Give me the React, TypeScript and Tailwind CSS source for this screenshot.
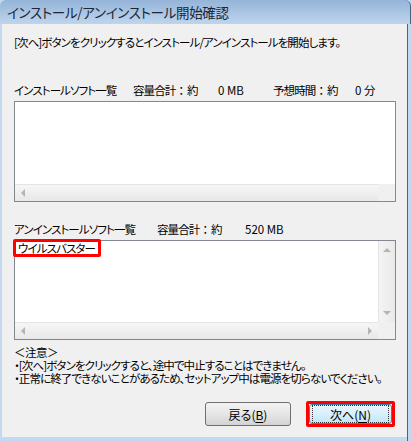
import React from 'react'

const FONT = "font-['Noto_Sans_CJK_JP','Noto_Sans',sans-serif] [font-feature-settings:'palt']"

function Tri({ dir }: { dir: 'up' | 'down' | 'left' | 'right' }) {
  const pts = {
    up: '0,4 4,0 8,4',
    down: '0,0 8,0 4,4',
    left: '4,0 4,8 0,4',
    right: '0,0 0,8 4,4',
  }[dir]
  const vertical = dir === 'up' || dir === 'down'
  return (
    <svg width={vertical ? 8 : 4} height={vertical ? 4 : 8} viewBox={vertical ? '0 0 8 4' : '0 0 4 8'}>
      <polygon points={pts} fill="#b4b4b4" />
    </svg>
  )
}

function HScroll({ showRight }: { showRight: boolean }) {
  return (
    <div className="flex h-[17px] shrink-0">
      <div className="flex-1 flex items-center justify-between px-[6px] bg-gradient-to-b from-[#f6f6f6] to-[#e8e8e8] border-t border-[#e4e4e4]">
        <Tri dir="left" />
        {showRight && <Tri dir="right" />}
      </div>
      <div className="w-[17px] bg-[#f0f0f0]" />
    </div>
  )
}

// full-width colon without proportional squeeze
function Colon() {
  return <span className="[font-feature-settings:normal] tracking-normal">：</span>
}

function Button({ label, hotkey, primary }: { label: string; hotkey: string; primary?: boolean }) {
  const inner = (
    <div
      className={`w-full h-full flex items-center justify-center rounded-[3px] border text-[12px] tracking-normal text-black ${
        primary
          ? 'border-[#3c7fb1] bg-gradient-to-b from-[#eaf6fd] via-[#d9f0fc] to-[#bee6fd]'
          : 'border-[#707070] bg-gradient-to-b from-[#f2f2f2] via-[#e6e6e6] to-[#d3d3d3]'
      }`}
    >
      <div className={`flex items-center justify-center w-full h-full ${primary ? 'border border-dotted border-[#333] m-[2px]' : ''}`}>
        {label}(<span className="underline underline-offset-2">{hotkey}</span>)
      </div>
    </div>
  )
  if (primary) {
    return (
      <div className="w-[89px] h-[26px] border-[3px] border-[#ff0000] rounded-[2px] flex">
        {inner}
      </div>
    )
  }
  return <div className="w-[86px] h-[24px] flex">{inner}</div>
}

export default function App() {
  return (
    <div className={`w-[411px] h-[441px] bg-[#c4d9ef] flex flex-col ${FONT} text-black`}>
      {/* title bar */}
      <div className="h-[24px] shrink-0 flex items-center pl-[7px] bg-gradient-to-b from-[#94b4d8] to-[#bfd5ed] border-r border-[#4a6480] rounded-tl-[6px] rounded-tr-[6px]">
        <span className="text-[13.5px] text-[#1c2634] tracking-[-0.3px]">インストール/アンインストール開始確認</span>
      </div>

      <div className="flex flex-1">
        <div className="w-[2px] shrink-0" />
        <div className="flex-1 flex flex-col bg-[#f0f0f0] mb-[4px] text-[11.5px] leading-[13px] tracking-[-0.9px] whitespace-nowrap">
          <div className="pl-[12px] pt-[12px]">[次へ]ボタンをクリックするとインストール/アンインストールを開始します。</div>

          <div className="flex pl-[12px] mt-[35px]">
            <span className="w-[119px]">インストールソフト一覧</span>
            <span className="w-[85px]">容量合計<Colon />約</span>
            <span className="w-[55px] tracking-normal">0 MB</span>
            <span className="w-[82px]">予想時間<Colon />約</span>
            <span className="tracking-normal">0 分</span>
          </div>

          <div className="ml-[12px] mt-[4px] w-[382px] h-[101px] border border-[#828790] bg-white flex flex-col">
            <div className="flex-1" />
            <HScroll showRight={false} />
          </div>

          <div className="flex pl-[12px] mt-[21px]">
            <span className="w-[143px]">アンインストールソフト一覧</span>
            <span className="w-[88px]">容量合計<Colon />約</span>
            <span className="tracking-normal">520 MB</span>
          </div>

          <div className="relative ml-[12px] mt-[4px] w-[382px] h-[100px] border border-[#828790] bg-white flex flex-col">
            <div className="flex flex-1">
              <div className="flex-1" />
              <div className="w-[17px] flex flex-col items-center justify-between py-[7px] bg-gradient-to-r from-[#f4f4f4] to-[#e9e9e9] border-l border-[#e4e4e4]">
                <Tri dir="up" />
                <Tri dir="down" />
              </div>
            </div>
            <HScroll showRight={true} />
            <div className="absolute left-[-2px] top-[-2px] w-[88px] h-[18px] border-[3px] border-[#ff0000] rounded-[2px] flex items-center pl-[2px]">
              ウイルスバスター
            </div>
          </div>

          <div className="pl-[12px] mt-[6px] flex flex-col">
            <span className="[font-feature-settings:normal] tracking-[-0.5px]">＜注意＞</span>
            <span>・[次へ]ボタンをクリックすると、途中で中止することはできません。</span>
            <span>・正常に終了できないことがあるため、セットアップ中は電源を切らないでください。</span>
          </div>

          <div className="flex justify-end items-center gap-[15px] pr-[12px] mt-[16px]">
            <Button label="戻る" hotkey="B" />
            <Button label="次へ" hotkey="N" primary />
          </div>
        </div>
        <div className="w-[1px] bg-[#4a6480] shrink-0" />
        <div className="w-[3px] shrink-0" />
      </div>
    </div>
  )
}
